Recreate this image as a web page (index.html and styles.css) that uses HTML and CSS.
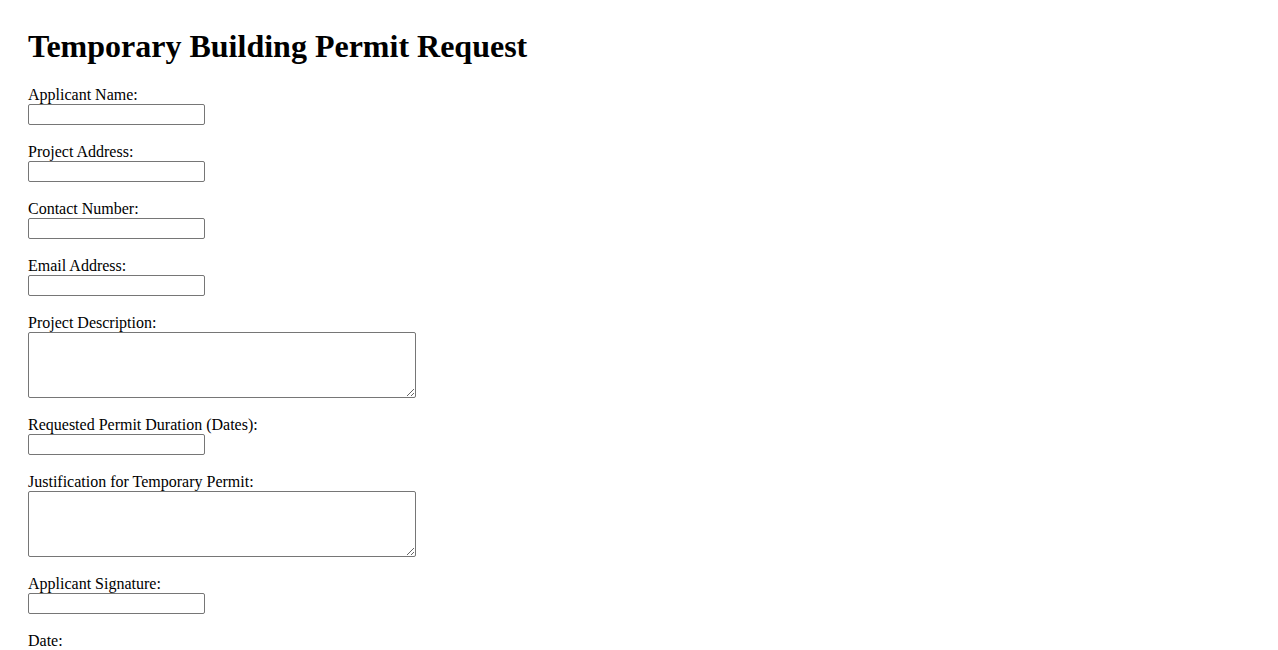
FILE: index.html
```html
<!DOCTYPE html>
<html lang="en">
<head>
<meta charset="utf-8">
<title>Temporary Building Permit Request</title>
<link rel="stylesheet" href="styles.css">
</head>
<body>
<div class="page">
  <h1 class="title">Temporary Building Permit Request</h1>
  <form class="form">
    <div class="field">
      <label class="label" for="name">Applicant Name:</label>
      <input class="input" type="text" id="name">
    </div>
    <div class="field">
      <label class="label" for="address">Project Address:</label>
      <input class="input" type="text" id="address">
    </div>
    <div class="field">
      <label class="label" for="phone">Contact Number:</label>
      <input class="input" type="text" id="phone">
    </div>
    <div class="field">
      <label class="label" for="email">Email Address:</label>
      <input class="input" type="text" id="email">
    </div>
    <div class="field">
      <label class="label" for="desc">Project Description:</label>
      <textarea class="textarea" id="desc"></textarea>
    </div>
    <div class="field">
      <label class="label" for="dates">Requested Permit Duration (Dates):</label>
      <input class="input" type="text" id="dates">
    </div>
    <div class="field">
      <label class="label" for="just">Justification for Temporary Permit:</label>
      <textarea class="textarea" id="just"></textarea>
    </div>
    <div class="field">
      <label class="label" for="sig">Applicant Signature:</label>
      <input class="input" type="text" id="sig">
    </div>
    <div class="field">
      <label class="label" for="date">Date:</label>
      <input class="input" type="text" id="date">
    </div>
  </form>
</div>
</body>
</html>
```
FILE: styles.css
```css
html, body {
  margin: 0;
  padding: 0;
  background: #ffffff;
}
body {
  font-family: "Liberation Serif", "Times New Roman", serif;
  font-size: 16px;
  color: #000000;
}
.page {
  padding: 28px 28px;
}
.title {
  margin: 0 0 21px 0;
  font-size: 32px;
  font-weight: bold;
  line-height: 37px;
}
.form {
  display: flex;
  flex-direction: column;
}
.field {
  display: flex;
  flex-direction: column;
  align-items: flex-start;
  margin-bottom: 18px;
}
.label {
  display: block;
  line-height: 18px;
  height: 18px;
}
.input {
  box-sizing: border-box;
  width: 177px;
  height: 21px;
  margin: 0;
  padding: 1px 2px;
  border: 1px solid #767676;
  border-radius: 2px;
  background: #ffffff;
  font-family: "Liberation Sans", Arial, sans-serif;
  font-size: 13px;
}
.textarea {
  box-sizing: border-box;
  width: 388px;
  height: 66px;
  margin: 0;
  padding: 2px;
  border: 1px solid #767676;
  border-radius: 2px;
  background: #ffffff;
  font-family: "Liberation Mono", monospace;
  font-size: 13px;
}
```
